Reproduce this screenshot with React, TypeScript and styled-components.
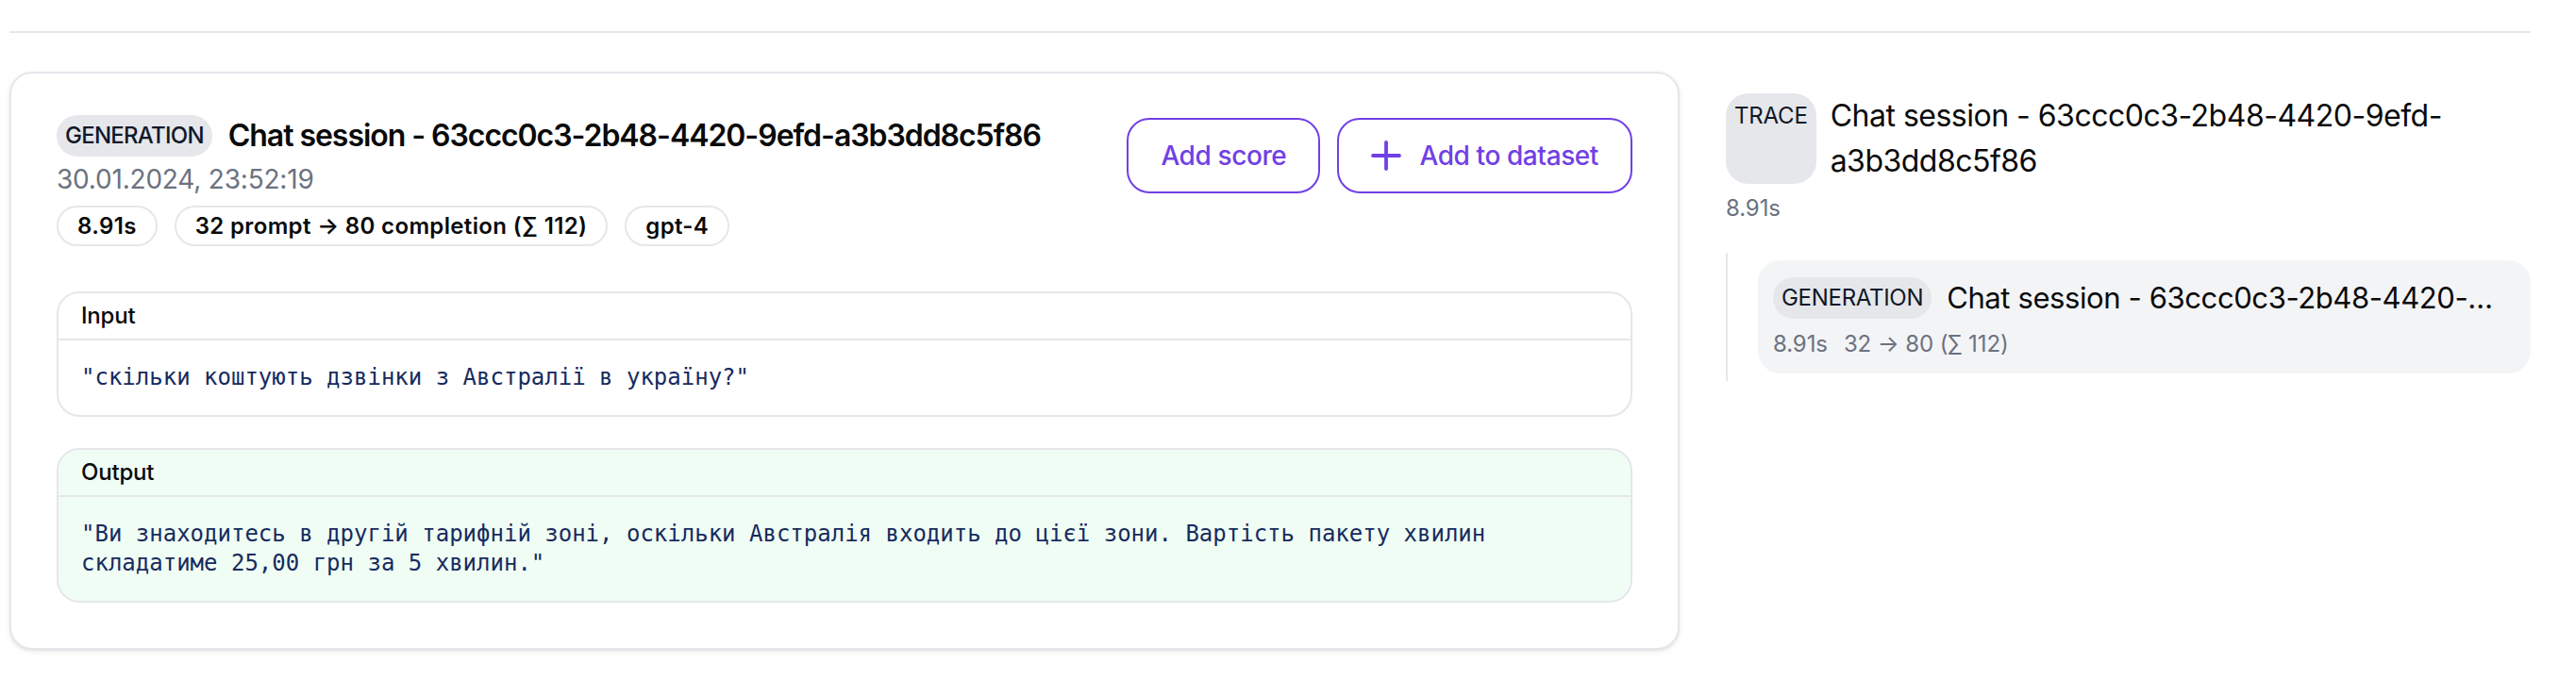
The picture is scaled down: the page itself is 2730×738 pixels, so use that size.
import React from "react";
import styled, { createGlobalStyle } from "styled-components";

const GlobalStyle = createGlobalStyle`
  html, body { margin: 0; padding: 0; background: #ffffff; }
  body {
    font-family: Inter, "Noto Sans", "DejaVu Sans", sans-serif;
    color: #111827;
    -webkit-font-smoothing: antialiased;
  }
  * { box-sizing: border-box; }
`;

const Page = styled.div`
  padding: 0 48px 40px 10px;
  width: 2730px;
`;

const TopBar = styled.div`
  height: 35px;
  border-bottom: 2px solid #e5e7eb;
`;

const Layout = styled.div`
  display: grid;
  grid-template-columns: 1770px 853px;
  column-gap: 49px;
  margin-top: 41px;
  align-items: start;
`;

const Card = styled.section`
  border: 2px solid #e5e7eb;
  border-radius: 24px;
  padding: 44px 48px 48px 48px;
  background: #ffffff;
  box-shadow: 0 2px 6px rgba(0, 0, 0, 0.08), 0 1px 2px rgba(0, 0, 0, 0.06);
`;

const Header = styled.div`
  display: flex;
  justify-content: space-between;
  align-items: flex-start;
`;

const HeaderInfo = styled.div`
  display: flex;
  flex-direction: column;
`;

const TitleRow = styled.div`
  display: flex;
  align-items: center;
  gap: 17px;
`;

const TypeBadge = styled.span<{ $weight?: number; $tall?: boolean }>`
  display: inline-flex;
  align-items: ${(p) => (p.$tall ? "flex-start" : "center")};
  align-self: ${(p) => (p.$tall ? "stretch" : "auto")};
  height: ${(p) => (p.$tall ? "auto" : "44px")};
  padding: ${(p) => (p.$tall ? "8px 9px" : "0 9px")};
  border-radius: 24px;
  background: #e5e7eb;
  color: #111827;
  font-size: 24px;
  line-height: 32px;
  font-weight: ${(p) => p.$weight ?? 500};
  letter-spacing: ${(p) => (p.$tall ? "-0.2px" : p.$weight === 400 ? "-0.3px" : "-0.75px")};
  white-space: nowrap;
`;

const MainTitle = styled.h2`
  margin: 0;
  font-size: 32px;
  line-height: 44px;
  font-weight: 600;
  letter-spacing: -1.05px;
  color: #0a0a0a;
`;

const DateText = styled.div`
  margin-top: 4px;
  font-size: 28px;
  line-height: 40px;
  color: #6b7280;
  letter-spacing: -0.2px;
`;

const ChipRow = styled.div`
  display: flex;
  gap: 18px;
  margin-top: 8px;
`;

const Chip = styled.span`
  display: inline-flex;
  align-items: center;
  height: 43px;
  padding: 0 20px;
  border: 2px solid #e5e7eb;
  border-radius: 999px;
  font-size: 24px;
  font-weight: 600;
  color: #0a0a0a;
  letter-spacing: 0.35px;
  white-space: nowrap;
`;

const Actions = styled.div`
  display: flex;
  gap: 18px;
  margin-top: 3px;
`;

const OutlineButton = styled.button`
  display: inline-flex;
  align-items: center;
  gap: 19px;
  height: 80px;
  padding: 0 34px;
  border: 2px solid #7040e6;
  border-radius: 24px;
  background: #ffffff;
  color: #7040e6;
  font-family: inherit;
  font-size: 28px;
  font-weight: 500;
  letter-spacing: -0.4px;
  cursor: pointer;
`;

const IOList = styled.div`
  display: flex;
  flex-direction: column;
  gap: 33px;
  margin-top: 48px;
`;

const IOBox = styled.div<{ $bg: string }>`
  border: 2px solid #e5e7eb;
  border-radius: 24px;
  background: ${(p) => p.$bg};
  overflow: hidden;
`;

const IOHeader = styled.div`
  padding: 8px 24px;
  font-size: 24px;
  line-height: 32px;
  font-weight: 500;
  color: #0a0a0a;
  border-bottom: 2px solid #e5e7eb;
  letter-spacing: -0.2px;
`;

const IOBody = styled.pre`
  margin: 0;
  padding: 24px 24px;
  font-family: "DejaVu Sans Mono", "Liberation Mono", monospace;
  font-size: 24px;
  line-height: 31px;
  color: #172b5e;
  white-space: pre-wrap;
  word-break: normal;
`;

const Side = styled.aside`
  padding-top: 23px;
  display: flex;
  flex-direction: column;
`;

const TraceRow = styled.div`
  display: flex;
  gap: 15px;
`;

const TraceTitle = styled.div`
  font-size: 32px;
  line-height: 48px;
  color: #0a0a0a;
  letter-spacing: -0.5px;
`;

const Muted = styled.div`
  font-size: 24px;
  line-height: 32px;
  color: #6b7280;
  letter-spacing: -0.1px;
`;

const TraceDuration = styled(Muted)`
  margin-top: 10px;
`;

const Tree = styled.div`
  margin-top: 31px;
  border-left: 2px solid #e5e7eb;
  padding: 8px 0 8px 32px;
`;

const TreeItem = styled.div`
  background: #f3f4f6;
  border-radius: 24px;
  padding: 17px 26px 15px 16px;
`;

const TreeItemTop = styled.div`
  display: flex;
  align-items: center;
  gap: 16px;
  min-width: 0;
`;

const TreeItemTitle = styled.div`
  flex: 1;
  min-width: 0;
  font-size: 31px;
  line-height: 46px;
  color: #0a0a0a;
  letter-spacing: -0.4px;
  white-space: nowrap;
  overflow: hidden;
  text-overflow: ellipsis;
`;

const TreeMeta = styled(Muted)`
  display: flex;
  gap: 17px;
  margin-top: 10px;
`;

const PlusIcon = () => (
  <svg width="32" height="32" viewBox="0 0 32 32" fill="none" aria-hidden="true">
    <path d="M2 16h28M16 2v28" stroke="currentColor" strokeWidth="3.8" strokeLinecap="round" />
  </svg>
);

const TITLE = "Chat session - 63ccc0c3-2b48-4420-9efd-a3b3dd8c5f86";

export default function App() {
  return (
    <Page>
      <GlobalStyle />
      <TopBar />
      <Layout>
        <Card>
          <Header>
            <HeaderInfo>
              <TitleRow>
                <TypeBadge $weight={500}>GENERATION</TypeBadge>
                <MainTitle>{TITLE}</MainTitle>
              </TitleRow>
              <DateText>30.01.2024, 23:52:19</DateText>
              <ChipRow>
                <Chip>8.91s</Chip>
                <Chip>32 prompt → 80 completion (∑ 112)</Chip>
                <Chip>gpt-4</Chip>
              </ChipRow>
            </HeaderInfo>
            <Actions>
              <OutlineButton>Add score</OutlineButton>
              <OutlineButton>
                <PlusIcon />
                Add to dataset
              </OutlineButton>
            </Actions>
          </Header>
          <IOList>
            <IOBox $bg="#ffffff">
              <IOHeader>Input</IOHeader>
              <IOBody>"скільки коштують дзвінки з Австралії в україну?"</IOBody>
            </IOBox>
            <IOBox $bg="#f0fdf4">
              <IOHeader>Output</IOHeader>
              <IOBody>
                "Ви знаходитесь в другій тарифній зоні, оскільки Австралія входить до цієї зони. Вартість пакету хвилин складатиме 25,00 грн за 5 хвилин."
              </IOBody>
            </IOBox>
          </IOList>
        </Card>
        <Side>
          <TraceRow>
            <TypeBadge $tall $weight={400}>TRACE</TypeBadge>
            <TraceTitle>{TITLE}</TraceTitle>
          </TraceRow>
          <TraceDuration>8.91s</TraceDuration>
          <Tree>
            <TreeItem>
              <TreeItemTop>
                <TypeBadge $weight={400}>GENERATION</TypeBadge>
                <TreeItemTitle>{TITLE}</TreeItemTitle>
              </TreeItemTop>
              <TreeMeta>
                <span>8.91s</span>
                <span>32 → 80 (∑ 112)</span>
              </TreeMeta>
            </TreeItem>
          </Tree>
        </Side>
      </Layout>
    </Page>
  );
}
